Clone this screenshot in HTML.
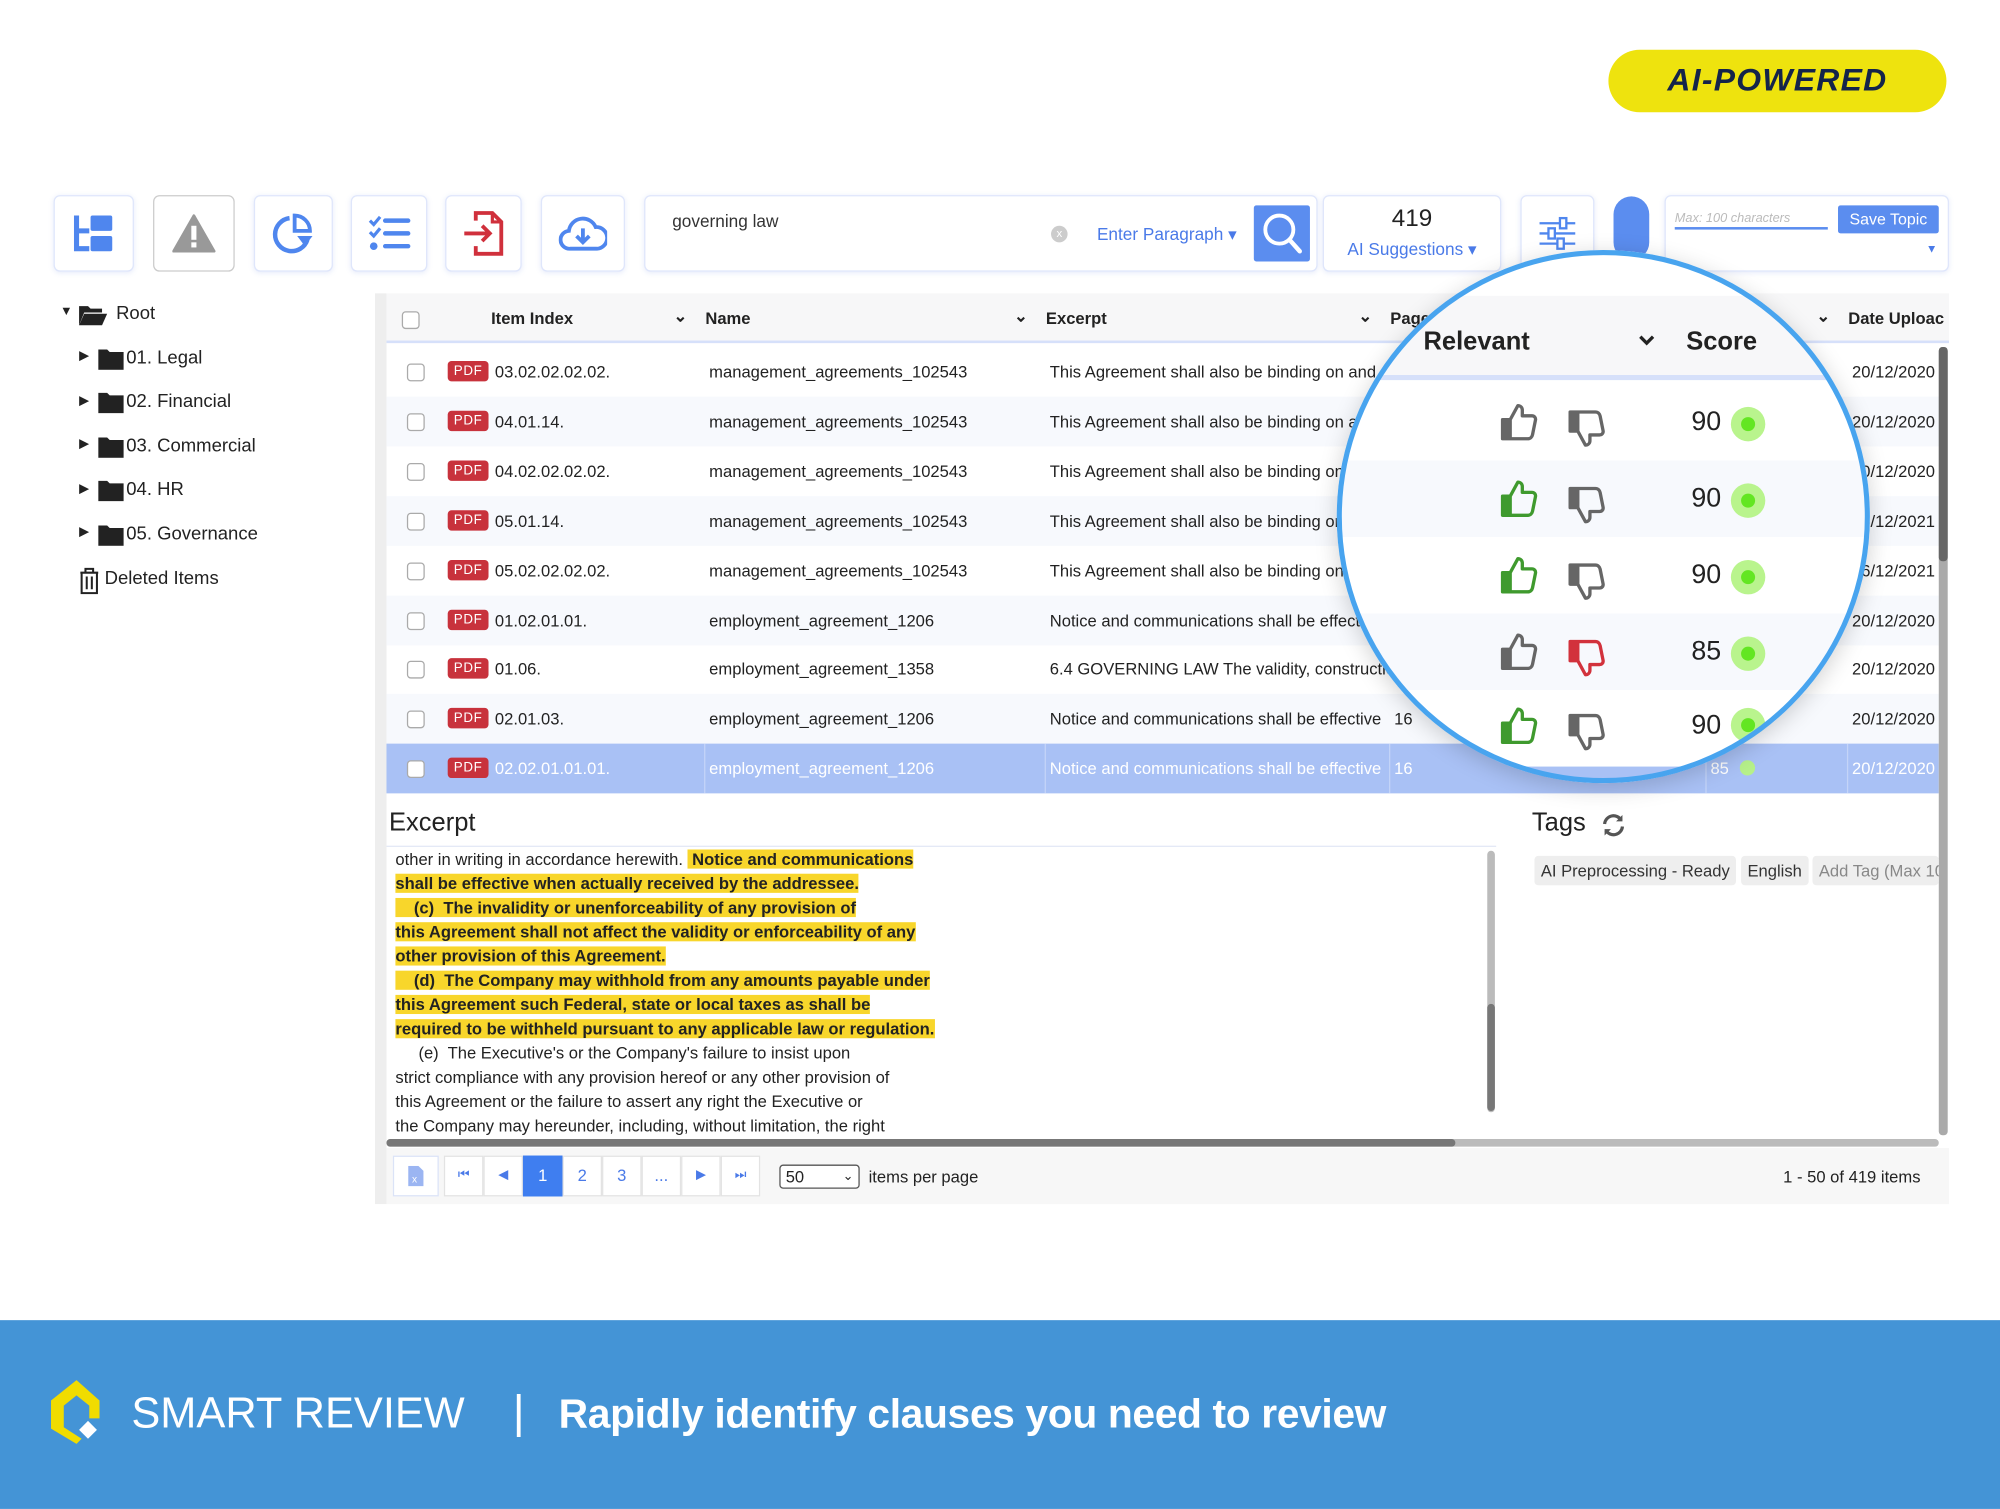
<!DOCTYPE html>
<html><head><meta charset="utf-8">
<style>
*{box-sizing:border-box;margin:0;padding:0}
html,body{width:2000px;height:1509px;overflow:hidden;background:#fff}
#r{position:absolute;left:0;top:0;width:1568px;height:1183px;transform:scale(1.27551);transform-origin:0 0;font-family:"Liberation Sans",Arial,sans-serif;color:#222}
.a{position:absolute}
.btn{position:absolute;top:153px;height:60px;border:1.5px solid #dfe6fb;border-radius:5px;background:#fff;box-shadow:0 1px 4px rgba(90,120,220,.15)}
.btn svg{position:absolute;left:50%;top:50%;transform:translate(-50%,-50%)}
.tr{position:absolute;font-size:14.5px;color:#222}
.row{position:absolute;left:303px;width:1217px;height:39px;font-size:13px;color:#222}
.row.alt{background:#f7f9fd}
.row.sel{background:#a9c1f5;color:#fff}
.row span{position:absolute;top:12px;white-space:nowrap;overflow:hidden}
.cb{position:absolute;left:16px;top:13px;width:14px;height:14px;border:1px solid #aaa;border-radius:3px;background:#fff}
.pdf{position:absolute;left:48px;top:11px;width:32px;height:16px;background:#c8323c;color:#fff;font-size:10.5px;border-radius:3px;text-align:center;line-height:16px;letter-spacing:.5px}
.hl{background:#f8d62b;font-weight:bold}
.ex div{height:19px;white-space:nowrap}
.pg{position:absolute;top:906px;height:32px;width:31px;border:1px solid #e3e3e3;background:#fff;font-size:13px;color:#4a7ae8;text-align:center;line-height:30px}
.chip{position:absolute;top:671px;height:23px;background:#eee;border-radius:3px;font-size:13px;line-height:23px;padding:0 5px;color:#333}
.mrow{position:absolute;left:0;width:420px;height:60px}
</style></head><body><div id="r">

<div class="a" style="left:1261px;top:39px;width:265px;height:49px;border-radius:25px;background:#eee30e;text-align:center;line-height:49px;font-size:25px;font-weight:bold;font-style:italic;color:#14244a;letter-spacing:1px">AI-POWERED</div>

<div class="btn" style="left:42px;width:63px"><svg width="36" height="32" viewBox="0 0 36 32"><path d="M4 2v26h10M4 14h10" stroke="#4f86ee" stroke-width="4" fill="none"/><rect x="15" y="2" width="17" height="12" rx="1.5" fill="#4f86ee"/><rect x="15" y="18" width="17" height="12" rx="1.5" fill="#4f86ee"/></svg></div>
<div class="btn" style="left:120px;width:64px;border-color:#ccc;box-shadow:none"><svg width="34" height="32" viewBox="0 0 34 32"><path d="M17 2L33 30H1z" fill="#999" stroke="#999" stroke-linejoin="round" stroke-width="2"/><rect x="15" y="10" width="4" height="11" fill="#fff"/><rect x="15" y="23" width="4" height="4" fill="#fff"/></svg></div>
<div class="btn" style="left:199px;width:62px"><svg width="34" height="34" viewBox="0 0 34 34"><path d="M14 5A13 13 0 1 0 28 22" stroke="#4f86ee" stroke-width="3.5" fill="none"/><path d="M18 3v12h12A12 12 0 0 0 18 3z" stroke="#4f86ee" stroke-width="3" fill="none"/><path d="M20 19h12l-6 8z" fill="#4f86ee"/></svg></div>
<div class="btn" style="left:275px;width:60px"><svg width="34" height="28" viewBox="0 0 34 28"><path d="M2 4l3 3 5-6M2 13l3 3 5-6" stroke="#4f86ee" stroke-width="2.5" fill="none"/><circle cx="5" cy="24" r="3" fill="#4f86ee"/><path d="M14 4h18M14 14h18M14 24h18" stroke="#4f86ee" stroke-width="3.5" stroke-linecap="round"/></svg></div>
<div class="btn" style="left:349px;width:60px"><svg width="32" height="36" viewBox="0 0 32 36"><path d="M10 8V2h13l7 7v25H10v-6" stroke="#d0303c" stroke-width="3" fill="none"/><path d="M23 2v7h7" stroke="#d0303c" stroke-width="2.5" fill="none"/><path d="M1 18h19M15 12l6 6-6 6" stroke="#d0303c" stroke-width="3" fill="none"/></svg></div>
<div class="btn" style="left:424px;width:66px"><svg width="38" height="30" viewBox="0 0 38 30"><path d="M10 27H9A7 7 0 0 1 8 13 11 11 0 0 1 29 10a8 8 0 0 1 1 17z" stroke="#4f86ee" stroke-width="3" fill="none"/><path d="M19 11v11M14 17l5 5 5-5" stroke="#4f86ee" stroke-width="3" fill="none"/></svg></div>
<div class="btn" style="left:505px;width:528px"></div>
<div class="a" style="left:527px;top:166px;font-size:13.5px;color:#333">governing law</div>
<div class="a" style="left:824px;top:177px;width:13px;height:13px;border-radius:50%;background:#ccc;color:#fff;font-size:9px;text-align:center;line-height:13px">x</div>
<div class="a" style="left:860px;top:176px;font-size:13.5px;color:#4a7ae8">Enter Paragraph ▾</div>
<div class="a" style="left:983px;top:161px;width:44px;height:44px;background:#5b8def;border-radius:2px"><svg width="44" height="44" viewBox="0 0 44 44"><circle cx="20" cy="19" r="11" stroke="#fff" stroke-width="3" fill="none"/><path d="M28 27l8 9" stroke="#fff" stroke-width="3.5" stroke-linecap="round"/></svg></div>
<div class="btn" style="left:1037px;width:140px"></div>
<div class="a" style="left:1037px;top:161px;width:140px;text-align:center;font-size:19px;color:#222">419</div>
<div class="a" style="left:1037px;top:188px;width:140px;text-align:center;font-size:13.5px;color:#4a7ae8">AI Suggestions ▾</div>
<div class="btn" style="left:1192px;width:58px"><svg width="32" height="28" viewBox="0 0 32 28"><path d="M2 6h28M2 14h28M2 22h28" stroke="#4f86ee" stroke-width="1.8"/><rect x="18" y="2" width="5" height="8" fill="#fff" stroke="#4f86ee" stroke-width="1.8"/><rect x="9" y="10" width="5" height="8" fill="#fff" stroke="#4f86ee" stroke-width="1.8"/><rect x="16" y="18" width="5" height="8" fill="#fff" stroke="#4f86ee" stroke-width="1.8"/></svg></div>
<div class="a" style="left:1265px;top:154px;width:28px;height:50px;border-radius:14px;background:#5b8def"></div>
<div class="btn" style="left:1305px;width:223px"></div>
<div class="a" style="left:1313px;top:166px;width:120px;border-bottom:2px solid #5b8def;font-size:10px;font-style:italic;color:#bbb;padding-bottom:1px">Max: 100 characters</div>
<div class="a" style="left:1441px;top:161px;width:79px;height:22px;background:#5b8def;color:#fff;font-size:12.5px;text-align:center;line-height:22px;border-radius:2px">Save Topic</div>
<div class="a" style="left:1510px;top:190px;font-size:9px;color:#4a7ae8">▼</div>

<div class="tr" style="left:47px;top:239px;font-size:10px">▼</div>
<svg class="a" style="left:61px;top:238px" width="24" height="18" viewBox="0 0 24 18"><path d="M1 2h7l2 2h9v3H5L1 17z" fill="#222"/><path d="M5 8h18l-4 9H1z" fill="#222"/></svg>
<div class="tr" style="left:91px;top:238px">Root</div>
<div class="tr" style="left:62px;top:274px;font-size:10px">▶</div><svg class="a" style="left:77px;top:273px" width="20" height="17"><path d="M0 1h7l2 2h11v14H0z" fill="#222"/></svg><div class="tr" style="left:99px;top:273px">01. Legal</div>
<div class="tr" style="left:62px;top:309px;font-size:10px">▶</div><svg class="a" style="left:77px;top:307px" width="20" height="17"><path d="M0 1h7l2 2h11v14H0z" fill="#222"/></svg><div class="tr" style="left:99px;top:307px">02. Financial</div>
<div class="tr" style="left:62px;top:343px;font-size:10px">▶</div><svg class="a" style="left:77px;top:342px" width="20" height="17"><path d="M0 1h7l2 2h11v14H0z" fill="#222"/></svg><div class="tr" style="left:99px;top:342px">03. Commercial</div>
<div class="tr" style="left:62px;top:378px;font-size:10px">▶</div><svg class="a" style="left:77px;top:376px" width="20" height="17"><path d="M0 1h7l2 2h11v14H0z" fill="#222"/></svg><div class="tr" style="left:99px;top:376px">04. HR</div>
<div class="tr" style="left:62px;top:412px;font-size:10px">▶</div><svg class="a" style="left:77px;top:411px" width="20" height="17"><path d="M0 1h7l2 2h11v14H0z" fill="#222"/></svg><div class="tr" style="left:99px;top:411px">05. Governance</div>
<svg class="a" style="left:61px;top:444px" width="18" height="22" viewBox="0 0 18 22"><path d="M2 5h14M6 5V2h6v3M3 5v16h12V5M7 8v10M11 8v10" stroke="#222" stroke-width="1.6" fill="none"/></svg>
<div class="tr" style="left:82px;top:446px">Deleted Items</div>
<div class="a" style="left:298px;top:577px;width:2px;height:18px;background:#333"></div>

<div class="a" style="left:294px;top:230px;width:9px;height:714px;background:#eee"></div>
<div class="a" style="left:303px;top:230px;width:1225px;height:39px;background:#f7f7f8;border-bottom:2px solid #d6e0fa;font-size:13px;font-weight:bold;color:#222">
 <div class="cb" style="top:14px;left:12px"></div>
 <span class="a" style="left:82px;top:12px">Item Index</span><span class="a" style="left:225px;top:10px">⌄</span>
 <span class="a" style="left:250px;top:12px">Name</span><span class="a" style="left:492px;top:10px">⌄</span>
 <span class="a" style="left:517px;top:12px">Excerpt</span><span class="a" style="left:762px;top:10px">⌄</span>
 <span class="a" style="left:787px;top:12px">Page</span>
 <span class="a" style="left:1121px;top:10px">⌄</span><span class="a" style="left:1146px;top:12px">Date Uploac</span>
</div>

<div class="row" style="top:272px"><div class="cb"></div><div class="pdf">PDF</div><span style="left:85px">03.02.02.02.02.</span><span style="left:253px">management_agreements_102543</span><span style="left:520px;width:258px">This Agreement shall also be binding on and</span><span style="left:1149px">20/12/2020</span></div>
<div class="row alt" style="top:311px"><div class="cb"></div><div class="pdf">PDF</div><span style="left:85px">04.01.14.</span><span style="left:253px">management_agreements_102543</span><span style="left:520px;width:258px">This Agreement shall also be binding on a</span><span style="left:1149px">20/12/2020</span></div>
<div class="row" style="top:350px"><div class="cb"></div><div class="pdf">PDF</div><span style="left:85px">04.02.02.02.02.</span><span style="left:253px">management_agreements_102543</span><span style="left:520px;width:258px">This Agreement shall also be binding on</span><span style="left:1149px">20/12/2020</span></div>
<div class="row alt" style="top:389px"><div class="cb"></div><div class="pdf">PDF</div><span style="left:85px">05.01.14.</span><span style="left:253px">management_agreements_102543</span><span style="left:520px;width:258px">This Agreement shall also be binding on</span><span style="left:1149px">26/12/2021</span></div>
<div class="row" style="top:428px"><div class="cb"></div><div class="pdf">PDF</div><span style="left:85px">05.02.02.02.02.</span><span style="left:253px">management_agreements_102543</span><span style="left:520px;width:258px">This Agreement shall also be binding on</span><span style="left:1149px">26/12/2021</span></div>
<div class="row alt" style="top:467px"><div class="cb"></div><div class="pdf">PDF</div><span style="left:85px">01.02.01.01.</span><span style="left:253px">employment_agreement_1206</span><span style="left:520px;width:258px">Notice and communications shall be effective</span><span style="left:1149px">20/12/2020</span></div>
<div class="row" style="top:505px"><div class="cb"></div><div class="pdf">PDF</div><span style="left:85px">01.06.</span><span style="left:253px">employment_agreement_1358</span><span style="left:520px;width:268px">6.4 GOVERNING LAW The validity, construction</span><span style="left:1149px">20/12/2020</span></div>
<div class="row alt" style="top:544px"><div class="cb"></div><div class="pdf">PDF</div><span style="left:85px">02.01.03.</span><span style="left:253px">employment_agreement_1206</span><span style="left:520px">Notice and communications shall be effective</span><span style="left:790px">16</span><span style="left:1149px">20/12/2020</span></div>
<div class="row sel" style="top:583px"><div class="cb"></div><div class="pdf">PDF</div><span style="left:85px">02.02.01.01.01.</span><span style="left:253px">employment_agreement_1206</span><span style="left:520px">Notice and communications shall be effective</span><span style="left:790px">16</span><span style="left:1038px">85</span><span class="a" style="left:1061px;top:13px;width:12px;height:12px;border-radius:50%;background:#b6f08a"></span><span style="left:1149px">20/12/2020</span>
 <div class="a" style="left:249px;top:0;width:1px;height:39px;background:#c4d4f8"></div><div class="a" style="left:516px;top:0;width:1px;height:39px;background:#c4d4f8"></div><div class="a" style="left:786px;top:0;width:1px;height:39px;background:#c4d4f8"></div><div class="a" style="left:1034px;top:0;width:1px;height:39px;background:#c4d4f8"></div><div class="a" style="left:1145px;top:0;width:1px;height:39px;background:#c4d4f8"></div></div>
<div class="a" style="left:1520px;top:272px;width:7px;height:618px;background:#aaa;border-radius:3px"></div>
<div class="a" style="left:1520px;top:272px;width:7px;height:168px;background:#666;border-radius:3px"></div>

<div class="a" style="left:305px;top:634px;font-size:20px;color:#222">Excerpt</div>
<div class="a" style="left:303px;top:663px;width:870px;height:232px;border-top:1px solid #e3e8f5"></div>
<div class="a ex" style="left:310px;top:664px;font-size:13px;line-height:19px;color:#222">
<div>other in writing in accordance herewith. <span class="hl">&nbsp;Notice and communications</span></div>
<div><span class="hl">shall be effective when actually received by the addressee.</span></div>
<div><span class="hl">&nbsp; &nbsp; (c)&nbsp; The invalidity or unenforceability of any provision of</span></div>
<div><span class="hl">this Agreement shall not affect the validity or enforceability of any</span></div>
<div><span class="hl">other provision of this Agreement.</span></div>
<div><span class="hl">&nbsp; &nbsp; (d)&nbsp; The Company may withhold from any amounts payable under</span></div>
<div><span class="hl">this Agreement such Federal, state or local taxes as shall be</span></div>
<div><span class="hl">required to be withheld pursuant to any applicable law or regulation.</span></div>
<div>&nbsp; &nbsp; &nbsp;(e)&nbsp; The Executive's or the Company's failure to insist upon</div>
<div>strict compliance with any provision hereof or any other provision of</div>
<div>this Agreement or the failure to assert any right the Executive or</div>
<div>the Company may hereunder, including, without limitation, the right</div>
</div>
<div class="a" style="left:1166px;top:667px;width:6px;height:205px;background:#bbb;border-radius:3px"></div>
<div class="a" style="left:1166px;top:787px;width:6px;height:84px;background:#777;border-radius:3px"></div>
<div class="a" style="left:303px;top:893px;width:1217px;height:6px;background:#bbb;border-radius:3px"></div>
<div class="a" style="left:303px;top:893px;width:838px;height:6px;background:#777;border-radius:3px"></div>

<div class="a" style="left:1201px;top:634px;font-size:20px">Tags</div>
<svg class="a" style="left:1255px;top:637px" width="20" height="20" viewBox="0 0 20 20"><path d="M3 9a7 7 0 0 1 13-3M17 11a7 7 0 0 1-13 3" stroke="#555" stroke-width="2.5" fill="none"/><path d="M17 2v5h-5zM3 18v-5h5z" fill="#555"/></svg>
<div class="chip" style="left:1203px">AI Preprocessing - Ready</div>
<div class="chip" style="left:1365px">English</div>
<div class="chip" style="left:1421px;width:99px;overflow:hidden;white-space:nowrap;color:#888">Add Tag (Max 10</div>

<div class="a" style="left:303px;top:900px;width:1225px;height:44px;background:#f7f7f7"></div>
<div class="pg" style="left:308px;width:36px;border-color:#dbe3f7"><svg width="12" height="16" viewBox="0 0 12 16" style="margin-top:7px"><path d="M0 0h8l4 4v12H0z" fill="#9bb5f2"/><text x="3" y="13" font-size="8" fill="#fff" font-family="Liberation Sans">x</text></svg></div>
<div class="pg" style="left:348px;font-size:10px">⏮</div>
<div class="pg" style="left:379px;font-size:10px">◀</div>
<div class="pg" style="left:410px;background:#3f7ef0;color:#fff;border-color:#3f7ef0">1</div>
<div class="pg" style="left:441px">2</div>
<div class="pg" style="left:472px">3</div>
<div class="pg" style="left:503px">...</div>
<div class="pg" style="left:534px;font-size:10px">▶</div>
<div class="pg" style="left:565px;font-size:10px">⏭</div>
<div class="a" style="left:611px;top:913px;width:63px;height:19px;border:1px solid #555;border-radius:3px;background:#fff;font-size:13px;line-height:17px;padding-left:4px">50<span style="position:absolute;right:4px;font-size:10px">⌄</span></div>
<div class="a" style="left:681px;top:915px;font-size:13px">items per page</div>
<div class="a" style="left:1398px;top:915px;font-size:13px">1 - 50 of 419 items</div>

<div class="a" style="left:1048px;top:196px;width:418px;height:418px;border-radius:50%;box-shadow:0 4px 18px rgba(0,0,0,.18)"></div>
<div class="a" style="left:1048px;top:196px;width:418px;height:418px;border-radius:50%;overflow:hidden;background:#fff">
 <div class="a" style="left:0;top:36px;width:418px;height:66px;background:#f7f7f9;border-bottom:4px solid #d6e0fa"></div>
 <div class="a" style="left:68px;top:61px;font-size:20px;font-weight:bold;color:#222">Relevant</div>
 <svg class="a" style="left:236px;top:66px" width="14" height="10"><path d="M2 2l5 5 5-5" stroke="#222" stroke-width="2.6" fill="none"/></svg>
 <div class="a" style="left:274px;top:61px;font-size:20px;font-weight:bold;color:#222">Score</div>
 <div class="mrow" style="top:105px"></div>
 <div class="mrow" style="top:165px;background:#f7f9fd"></div>
 <div class="mrow" style="top:225px"></div>
 <div class="mrow" style="top:285px;background:#f7f9fd"></div>
 <div class="mrow" style="top:345px"></div>
 <div class="mrow" style="top:405px;background:#a9c1f5"></div>
 <div class="a" style="left:309px;top:359px;width:27px;height:27px;border-radius:50%;background:#b9f48d"><div class="a" style="left:8px;top:8px;width:11px;height:11px;border-radius:50%;background:#63e622"></div></div>
</div>
<div class="a" style="left:1048px;top:196px;width:418px;height:418px;border-radius:50%;border:4px solid #48a4ef"></div>

<svg width="0" height="0" style="position:absolute"><defs>
<symbol id="tu" viewBox="0 0 30 32"><path d="M2 14h6v15H2zM8 14l6-11c2 0 3.5 1.5 3.5 3.5V11h7.5c2 0 3.2 1.6 2.8 3.4l-2.3 11.4c-.4 1.9-1.8 3.2-3.7 3.2H8" stroke="currentColor" stroke-width="2.6" fill="none" stroke-linejoin="round"/><path d="M2 14h6v15H2z" fill="currentColor"/></symbol>
</defs></svg>

<div class="a" style="left:1176px;top:315px;color:#666"><svg width="30" height="32"><use href="#tu"/></svg></div>
<div class="a" style="left:1229px;top:315px;color:#666;transform:scaleY(-1)"><svg width="30" height="32"><use href="#tu"/></svg></div>
<div class="a" style="left:1326px;top:319px;font-size:21px">90</div><div class="a" style="left:1357px;top:319px;width:27px;height:27px;border-radius:50%;background:#b9f48d"><div class="a" style="left:8px;top:8px;width:11px;height:11px;border-radius:50%;background:#63e622"></div></div>

<div class="a" style="left:1176px;top:375px;color:#3f9a2e"><svg width="30" height="32"><use href="#tu"/></svg></div>
<div class="a" style="left:1229px;top:375px;color:#666;transform:scaleY(-1)"><svg width="30" height="32"><use href="#tu"/></svg></div>
<div class="a" style="left:1326px;top:379px;font-size:21px">90</div><div class="a" style="left:1357px;top:379px;width:27px;height:27px;border-radius:50%;background:#b9f48d"><div class="a" style="left:8px;top:8px;width:11px;height:11px;border-radius:50%;background:#63e622"></div></div>

<div class="a" style="left:1176px;top:435px;color:#3f9a2e"><svg width="30" height="32"><use href="#tu"/></svg></div>
<div class="a" style="left:1229px;top:435px;color:#666;transform:scaleY(-1)"><svg width="30" height="32"><use href="#tu"/></svg></div>
<div class="a" style="left:1326px;top:439px;font-size:21px">90</div><div class="a" style="left:1357px;top:439px;width:27px;height:27px;border-radius:50%;background:#b9f48d"><div class="a" style="left:8px;top:8px;width:11px;height:11px;border-radius:50%;background:#63e622"></div></div>

<div class="a" style="left:1176px;top:495px;color:#666"><svg width="30" height="32"><use href="#tu"/></svg></div>
<div class="a" style="left:1229px;top:495px;color:#d2323c;transform:scaleY(-1)"><svg width="30" height="32"><use href="#tu"/></svg></div>
<div class="a" style="left:1326px;top:499px;font-size:21px">85</div><div class="a" style="left:1357px;top:499px;width:27px;height:27px;border-radius:50%;background:#b9f48d"><div class="a" style="left:8px;top:8px;width:11px;height:11px;border-radius:50%;background:#63e622"></div></div>

<div class="a" style="left:1176px;top:553px;color:#3f9a2e"><svg width="30" height="32"><use href="#tu"/></svg></div>
<div class="a" style="left:1229px;top:553px;color:#666;transform:scaleY(-1)"><svg width="30" height="32"><use href="#tu"/></svg></div>
<div class="a" style="left:1326px;top:557px;font-size:21px">90</div>

<div class="a" style="left:0;top:1035px;width:1568px;height:148px;background:#4494d6"></div>
<svg class="a" style="left:38px;top:1081px" width="48" height="52" viewBox="0 0 48 52"><path d="M22 1L2 17v22l20 12 4-4-14-9V21L22 13l10 8v10l8 0V17z" fill="#f0dc00"/><path d="M31 33l7 7-7 7-7-7z" fill="#fff"/></svg>
<div class="a" style="left:103px;top:1089px;font-size:34px;color:#fff">SMART REVIEW</div>
<div class="a" style="left:402px;top:1086px;font-size:36px;color:#fff">|</div>
<div class="a" style="left:438px;top:1090px;font-size:32px;color:#fff;font-weight:bold;letter-spacing:-.3px">Rapidly identify clauses you need to review</div>

</div></body></html>
